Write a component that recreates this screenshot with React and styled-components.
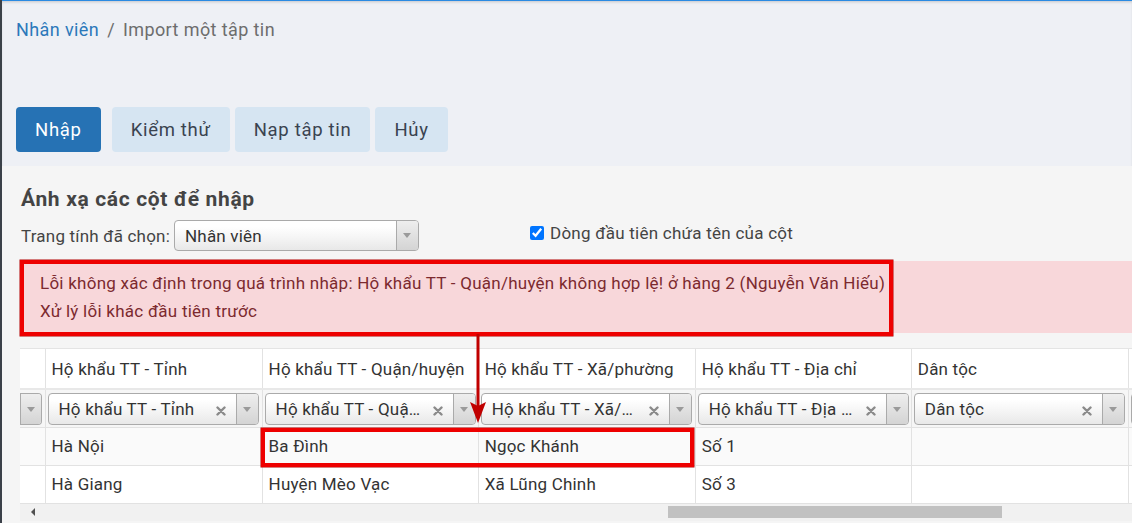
import React from "react";
import styled, { createGlobalStyle } from "styled-components";

const Global = createGlobalStyle`
  html, body { margin: 0; padding: 0; overflow: hidden; }
  body { font-family: Roboto, "Noto Sans", sans-serif; width: 1132px; height: 523px; background: #f5f5f5; }
  * { box-sizing: border-box; }
`;

const Frame = styled.div`
  display: flex;
  width: 1132px;
  height: 523px;
  overflow: hidden;
`;

const SideEdge = styled.div`
  width: 2px;
  flex: none;
  background: #3b4149;
`;

const Main = styled.div`
  flex: 1;
  min-width: 0;
  display: flex;
  flex-direction: column;
  position: relative;
`;

const Header = styled.header`
  height: 166px;
  background: #eef0f5;
  border-top: 1px solid #2a8ae2;
  box-shadow: inset 0 2px 3px -1px rgba(0, 0, 0, 0.18);
  padding: 18px 0 0 14px;
  display: flex;
  flex-direction: column;
`;

const Breadcrumb = styled.div`
  font-size: 18px;
  letter-spacing: 0.4px;
  line-height: 22px;
  display: flex;
  gap: 8px;
`;

const Crumb = styled.span`
  color: ${(p) => (p.$link ? "#2b78ba" : "#6d6d6d")};
`;

const Toolbar = styled.div`
  margin-top: 66px;
  display: flex;
  gap: 5px;
`;

const Button = styled.button`
  height: 45px;
  padding: 0 19px;
  border: none;
  border-radius: 4px;
  font-family: inherit;
  font-size: 18.5px;
  letter-spacing: 0.7px;
  background: ${(p) => (p.$primary ? "#2672b4" : "#d6e5f2")};
  color: ${(p) => (p.$primary ? "#ffffff" : "#3a4350")};
  margin-right: ${(p) => (p.$primary ? 6 : 0)}px;
`;

const Content = styled.section`
  flex: 1;
  background: #f5f5f5;
  padding: 20px 0 0 18px;
  display: flex;
  flex-direction: column;
`;

const Title = styled.h2`
  margin: 0 0 0 1px;
  font-size: 21px;
  letter-spacing: 0.65px;
  line-height: 26px;
  font-weight: 700;
  color: #444;
`;

const Options = styled.div`
  margin: 8px 0 0 1px;
  display: flex;
  align-items: center;
  height: 31px;
`;

const Label = styled.span`
  font-size: 17px;
  letter-spacing: 0.2px;
  color: #444;
  margin-right: 4px;
`;

const Select = styled.div`
  position: relative;
  display: flex;
  align-items: center;
  width: ${(p) => p.$w}px;
  height: ${(p) => p.$h || 31}px;
  border: 1px solid #aaa;
  border-radius: 4px;
  background: linear-gradient(#ffffff 20%, #f4f4f4 60%, #e8e8e8);
  padding-left: 10px;
  font-size: 17px;
  letter-spacing: 0.2px;
  color: #333;
  flex: none;
`;

const SelectText = styled.span`
  flex: 1;
  white-space: nowrap;
  overflow: hidden;
  text-overflow: ellipsis;
`;

const Clear = styled.span`
  width: 16px;
  margin: 0 7px 0 4px;
  display: flex;
  align-items: center;
  justify-content: center;
  padding-top: 4px;
`;

const Arrow = styled.span`
  width: 22px;
  align-self: stretch;
  border-left: 1px solid #aaa;
  background: linear-gradient(#eeeeee, #d4d4d4);
  border-radius: 0 3px 3px 0;
  display: flex;
  align-items: center;
  justify-content: center;
  &::after {
    content: "";
    border-left: 4px solid transparent;
    border-right: 4px solid transparent;
    border-top: 5px solid #9a9a9a;
  }
`;

const CheckLabel = styled.label`
  margin-left: 111px;
  display: flex;
  align-items: center;
  font-size: 17px;
  letter-spacing: 0.25px;
  color: #444;
  margin-top: -6px;
  input {
    width: 14px;
    height: 14px;
    margin: 0 6px 0 0;
  }
`;

const Alert = styled.div`
  margin-top: 10px;
  margin-left: 2px;
  background: #f8d7da;
  color: #7c2a2f;
  font-size: 17px;
  letter-spacing: 0.25px;
  line-height: 28px;
  padding: 8px 18px 8px;
`;

const TableWrap = styled.div`
  margin-top: 15px;
  overflow: hidden;
  border-top: 1px solid #e4e4e4;
`;

const Table = styled.table`
  border-collapse: collapse;
  table-layout: fixed;
  width: 1326px;
  font-size: 17px;
  letter-spacing: 0.2px;
  color: #333;
`;

const Cell = styled.td`
  height: ${(p) => p.$h || 38}px;
  padding: 0 6px;
  border-right: 1px solid #e2e2e2;
  border-bottom: ${(p) => (p.$thick ? 2 : 1)}px solid ${(p) => (p.$thick ? "#e8e8e8" : "#e2e2e2")};
  white-space: nowrap;
  overflow: hidden;
  background: ${(p) => p.$bg || "#fff"};
`;

const SelCell = styled.td`
  height: 38px;
  padding: 2px 3px 0 ${(p) => (p.$stub ? 0 : 2)}px;
  border-right: 1px solid #e2e2e2;
  border-bottom: 1px solid #e2e2e2;
  background: #f6f6f6;
  overflow: hidden;
`;

const Stub = styled.div`
  width: 22px;
  height: 32px;
  border: 1px solid #aaa;
  border-left: none;
  border-radius: 0 4px 4px 0;
  display: flex;
`;

const ScrollBar = styled.div`
  height: 17px;
  background: #f1f1f1;
  display: flex;
  align-items: center;
`;

const ScrollLeft = styled.span`
  width: 16px;
  margin-left: 5px;
  display: flex;
  align-items: center;
  justify-content: center;
  &::after {
    content: "";
    border-top: 4px solid transparent;
    border-bottom: 4px solid transparent;
    border-right: 4px solid #505050;
  }
`;

const Thumb = styled.div`
  margin-left: 627px;
  width: 334px;
  height: 12px;
  background: #c1c1c1;
`;

const Mark = styled.div`
  position: absolute;
  border: 4px solid #ee0000;
  box-shadow: 0 0 0 0.5px #b00000;
  pointer-events: none;
`;

const ArrowMark = styled.svg`
  position: absolute;
  pointer-events: none;
`;

const ClearIcon = () => (
  <svg width="10" height="10" viewBox="0 0 10 10">
    <path d="M1.5 1.5 L8.5 8.5 M8.5 1.5 L1.5 8.5" stroke="#8a8a8a" strokeWidth="2.4" strokeLinecap="round" />
  </svg>
);

const cols = [
  { head: "Hộ khẩu TT - Tỉnh", sel: "Hộ khẩu TT - Tỉnh", r1: "Hà Nội", r2: "Hà Giang" },
  { head: "Hộ khẩu TT - Quận/huyện", sel: "Hộ khẩu TT - Quận/huyện", r1: "Ba Đình", r2: "Huyện Mèo Vạc" },
  { head: "Hộ khẩu TT - Xã/phường", sel: "Hộ khẩu TT - Xã/phường", r1: "Ngọc Khánh", r2: "Xã Lũng Chinh" },
  { head: "Hộ khẩu TT - Địa chỉ", sel: "Hộ khẩu TT - Địa chỉ", r1: "Số 1", r2: "Số 3" },
  { head: "Dân tộc", sel: "Dân tộc", r1: "", r2: "" },
  { head: "", sel: "", r1: "", r2: "" },
];

const widths = [25, 217, 216, 217, 216, 217, 217];

export default function App() {
  return (
    <>
      <Global />
      <Frame>
        <SideEdge />
        <Main>
          <Header>
            <Breadcrumb>
              <Crumb $link>Nhân viên</Crumb>
              <Crumb>/</Crumb>
              <Crumb>Import một tập tin</Crumb>
            </Breadcrumb>
            <Toolbar>
              <Button $primary>Nhập</Button>
              <Button>Kiểm thử</Button>
              <Button>Nạp tập tin</Button>
              <Button>Hủy</Button>
            </Toolbar>
          </Header>
          <Content>
            <Title>Ánh xạ các cột để nhập</Title>
            <Options>
              <Label>Trang tính đã chọn:</Label>
              <Select $w={245}>
                <SelectText>Nhân viên</SelectText>
                <Arrow />
              </Select>
              <CheckLabel>
                <input type="checkbox" defaultChecked />
                Dòng đầu tiên chứa tên của cột
              </CheckLabel>
            </Options>
            <Alert>
              Lỗi không xác định trong quá trình nhập: Hộ khẩu TT - Quận/huyện không hợp lệ! ở hàng 2 (Nguyễn Văn Hiếu)
              <br />
              Xử lý lỗi khác đầu tiên trước
            </Alert>
            <TableWrap>
              <Table>
                <colgroup>
                  {widths.map((w, i) => (
                    <col key={i} style={{ width: w }} />
                  ))}
                </colgroup>
                <tbody>
                  <tr>
                    <Cell $h={40} $thick />
                    {cols.map((c, i) => (
                      <Cell key={i} $h={40} $thick>{c.head}</Cell>
                    ))}
                  </tr>
                  <tr>
                    <SelCell $stub>
                      <Stub>
                        <Arrow />
                      </Stub>
                    </SelCell>
                    {cols.map((c, i) => (
                      <SelCell key={i}>
                        <Select $w={211} $h={32}>
                          <SelectText>{c.sel}</SelectText>
                          <Clear>
                            <ClearIcon />
                          </Clear>
                          <Arrow />
                        </Select>
                      </SelCell>
                    ))}
                  </tr>
                  <tr>
                    <Cell $bg="#fafafa" />
                    {cols.map((c, i) => (
                      <Cell key={i} $bg="#fafafa">{c.r1}</Cell>
                    ))}
                  </tr>
                  <tr>
                    <Cell />
                    {cols.map((c, i) => (
                      <Cell key={i}>{c.r2}</Cell>
                    ))}
                  </tr>
                </tbody>
              </Table>
            </TableWrap>
            <ScrollBar>
              <ScrollLeft />
              <Thumb />
            </ScrollBar>
          </Content>
          <Mark style={{ left: 18, top: 260, width: 873, height: 76 }} />
          <Mark style={{ left: 259, top: 428, width: 433, height: 39 }} />
          <ArrowMark style={{ left: 464, top: 334 }} width="24" height="92" viewBox="0 0 24 92">
            <path d="M12 0 V72" stroke="#c00000" strokeWidth="3" />
            <path d="M4 68 L12 89 L20 68 L12 72 Z" fill="#c00000" />
          </ArrowMark>
        </Main>
      </Frame>
    </>
  );
}
